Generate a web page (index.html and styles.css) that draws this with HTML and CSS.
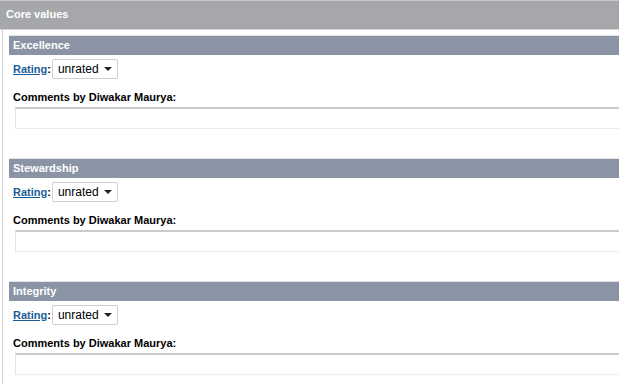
FILE: index.html
```html
<!DOCTYPE html>
<html>
<head>
<meta charset="utf-8">
<link rel="stylesheet" href="styles.css">
</head>
<body>
<div class="panel">
  <div class="panel-title">Core values</div>
  <div class="panel-body">
    <div class="section">
      <div class="section-title">Excellence</div>
      <div class="rating-row"><a class="rating-link" href="#">Rating</a><span class="colon">:</span>
        <div class="select"><span>unrated</span><span class="arrow"></span></div>
      </div>
      <div class="comments-label">Comments by Diwakar Maurya:</div>
      <div class="comment-box"></div>
    </div>
    <div class="section">
      <div class="section-title">Stewardship</div>
      <div class="rating-row"><a class="rating-link" href="#">Rating</a><span class="colon">:</span>
        <div class="select"><span>unrated</span><span class="arrow"></span></div>
      </div>
      <div class="comments-label">Comments by Diwakar Maurya:</div>
      <div class="comment-box"></div>
    </div>
    <div class="section">
      <div class="section-title">Integrity</div>
      <div class="rating-row"><a class="rating-link" href="#">Rating</a><span class="colon">:</span>
        <div class="select"><span>unrated</span><span class="arrow"></span></div>
      </div>
      <div class="comments-label">Comments by Diwakar Maurya:</div>
      <div class="comment-box"></div>
    </div>
  </div>
</div>
</body>
</html>
```

FILE: styles.css
```css
html, body {
  margin: 0;
  padding: 0;
  background: #ffffff;
  font-family: "Liberation Sans", Arial, sans-serif;
  font-size: 12px;
  color: #000;
  overflow: hidden;
}

.panel {
  height: 384px;
  overflow: hidden;
}

.panel-title {
  height: 28px;
  background: #a6a7aa;
  border-top: 1px solid #c6c6c6;
  border-bottom: 1px solid #d4d4d6;
  color: #fff;
  font-weight: bold;
  font-size: 11px;
  line-height: 27px;
  padding-left: 6px;
}

.panel-body {
  margin-left: 2px;
  border-left: 1px solid #cfcfcf;
  padding-left: 6px;
  padding-top: 5px;
  height: 400px;
}

.section {
  margin-bottom: 29px;
}

.section-title {
  height: 19px;
  background: #8a94a5;
  border-top: 1px solid #e2e4e8;
  color: #fff;
  font-weight: bold;
  font-size: 11px;
  line-height: 18px;
  padding-left: 4px;
}

.rating-row {
  display: flex;
  align-items: center;
  margin-top: 4px;
  padding-left: 4px;
  height: 20px;
}

.rating-link {
  color: #1a5d9a;
  font-weight: bold;
  font-size: 11px;
  text-decoration: underline;
}

.colon {
  font-weight: bold;
  font-size: 11px;
  margin-right: 1px;
}

.select {
  display: flex;
  align-items: center;
  justify-content: space-between;
  width: 55px;
  height: 18px;
  border: 1px solid #cfcfcf;
  border-radius: 2px;
  padding: 0 4px 0 5px;
  font-size: 12px;
  background: #fff;
}

.arrow {
  width: 0;
  height: 0;
  border-left: 4px solid transparent;
  border-right: 4px solid transparent;
  border-top: 4px solid #222;
  margin-right: 1px;
}

.comments-label {
  margin-top: 11px;
  padding-left: 4px;
  font-weight: bold;
  font-size: 11px;
  line-height: 14px;
}

.comment-box {
  margin-top: 3px;
  margin-left: 6px;
  height: 19px;
  border-top: 2px solid #cbcbcb;
  border-left: 1px solid #e4e4e4;
  border-bottom: 1px solid #ececec;
  background: #fff;
}
```
